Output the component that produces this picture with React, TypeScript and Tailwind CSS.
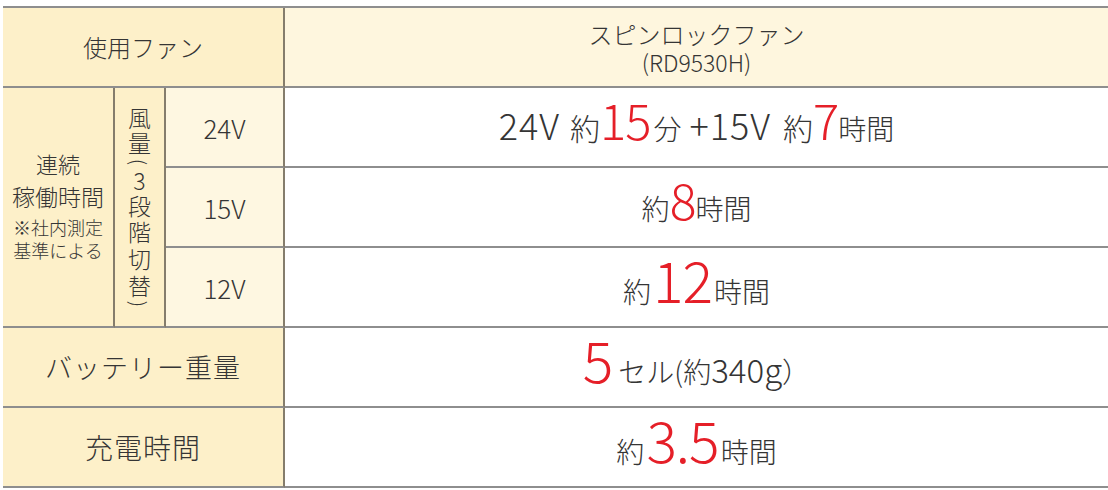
const hLine = "border-b-2 border-[#8e8e8e]"
const vLine = "border-r-2 border-r-[#857d6c]"

const fanRows = ["24V", "15V", "12V"]

// 風量（3段階切替） stacked top to bottom, each with its own slot height
const verticalChars = [
    { c: "風", h: "h-[26px] leading-[26px]" },
    { c: "量", h: "h-[25px] leading-[25px]" },
    { c: "(", h: "h-[14px] leading-[14px]", paren: true },
    { c: "3", h: "h-[23px] leading-[23px]" },
    { c: "段", h: "h-[26px] leading-[26px]" },
    { c: "階", h: "h-[27px] leading-[27px]" },
    { c: "切", h: "h-[27px] leading-[27px]" },
    { c: "替", h: "h-[26px] leading-[26px]" },
    { c: ")", h: "h-[12px] leading-[12px]", paren: true },
]

function Big({ children, size = "text-[50px]" }: { children: React.ReactNode; size?: string }) {
    return <span className={`${size} leading-none tracking-[-1px] text-[#e51f28]`}>{children}</span>
}

function FanValue({ volt }: { volt: string }) {
    if (volt === "24V") {
        return (
            <div className="flex items-baseline justify-center">
                <span className="text-[36px] leading-none tracking-[1px]">24V</span>
                <span className="ml-[10px] text-[30px] leading-none">約</span>
                <Big size="text-[49px]">15</Big>
                <span className="ml-[3px] text-[28px] leading-none">分</span>
                <span className="ml-[8px] text-[36px] leading-none tracking-[1px]">+15V</span>
                <span className="ml-[12px] text-[30px] leading-none">約</span>
                <Big size="text-[49px]">7</Big>
                <span className="text-[28px] leading-none">時間</span>
            </div>
        )
    }
    if (volt === "15V") {
        return (
            <div className="flex items-baseline justify-center">
                <span className="text-[28px] leading-none">約</span>
                <Big size="text-[50px]">8</Big>
                <span className="text-[28px] leading-none">時間</span>
            </div>
        )
    }
    return (
        <div className="flex items-baseline justify-center">
            <span className="mr-[2px] text-[28px] leading-none">約</span>
            <Big size="text-[57px]">12</Big>
            <span className="ml-[2px] text-[28px] leading-none">時間</span>
        </div>
    )
}

function FanRow({ volt }: { volt: string }) {
    return (
        <>
            <div className={`flex items-center justify-center bg-[#fef7e1] text-[26px] ${hLine} ${vLine}`}>
                {volt}
            </div>
            <div className={`flex items-center justify-center bg-white pb-[18px] ${hLine}`}>
                <FanValue volt={volt} />
            </div>
        </>
    )
}

export default function App() {
    return (
        <div className="w-[1108px] h-[490px] bg-white pt-[6px] pl-[3px] font-['Noto_Sans_CJK_JP',sans-serif] font-light text-[#353535]">
            <div className="grid grid-cols-[112px_51px_119px_1fr] grid-rows-[80px_80px_80px_80px_80px_80px] border-t-2 border-[#8e8e8e]">
                {/* Header */}
                <div className={`col-span-3 flex items-center justify-center bg-[#fdf0c9] text-[24px] ${hLine} ${vLine}`}>
                    使用ファン
                </div>
                <div className={`flex flex-col items-center justify-center bg-[#fef6de] ${hLine}`}>
                    <span className="text-[24px] leading-[30px]">スピンロックファン</span>
                    <span className="text-[23px] leading-[26px]">(RD9530H)</span>
                </div>

                {/* Fan running time */}
                <div className={`row-span-3 flex flex-col items-center justify-center bg-[#fdf0c9] pb-[6px] ${hLine} ${vLine}`}>
                    <span className="text-[22px] leading-[33px]">連続</span>
                    <span className="text-[23px] leading-[33px]">稼働時間</span>
                    <span className="mt-[3px] text-[18px] leading-[23px]">※社内測定</span>
                    <span className="text-[18px] leading-[23px]">基準による</span>
                </div>
                <div className={`row-span-3 flex flex-col items-center justify-center bg-[#fdf0c9] ${hLine} ${vLine}`}>
                    {verticalChars.map((v, i) =>
                        v.paren ? (
                            <span key={i} className={`${v.h} flex items-center justify-center text-[20px]`}>
                                <span className="inline-block rotate-90">{v.c}</span>
                            </span>
                        ) : (
                            <span key={i} className={`${v.h} text-[23px]`}>
                                {v.c}
                            </span>
                        )
                    )}
                </div>
                {fanRows.map((volt) => (
                    <FanRow key={volt} volt={volt} />
                ))}

                {/* Battery */}
                <div className={`col-span-3 flex items-center justify-center bg-[#fdf0c9] text-[27px] tracking-[1px] ${hLine} ${vLine}`}>
                    バッテリー重量
                </div>
                <div className={`flex items-center justify-center bg-white pb-[18px] ${hLine}`}>
                    <div className="flex items-baseline justify-center">
                        <Big size="text-[57px]">5</Big>
                        <span className="ml-[6px] text-[28px] leading-none">セル(約</span>
                        <span className="text-[33px] leading-none">340g</span>
                        <span className="text-[28px] leading-none">）</span>
                    </div>
                </div>

                {/* Charge */}
                <div className={`col-span-3 flex items-center justify-center bg-[#fdf0c9] text-[28px] tracking-[1px] ${hLine} ${vLine}`}>
                    充電時間
                </div>
                <div className={`flex items-center justify-center bg-white pb-[18px] ${hLine}`}>
                    <div className="flex items-baseline justify-center">
                        <span className="mr-[2px] text-[28px] leading-none">約</span>
                        <Big size="text-[57px]">3.5</Big>
                        <span className="ml-[2px] text-[28px] leading-none">時間</span>
                    </div>
                </div>
            </div>
        </div>
    )
}
